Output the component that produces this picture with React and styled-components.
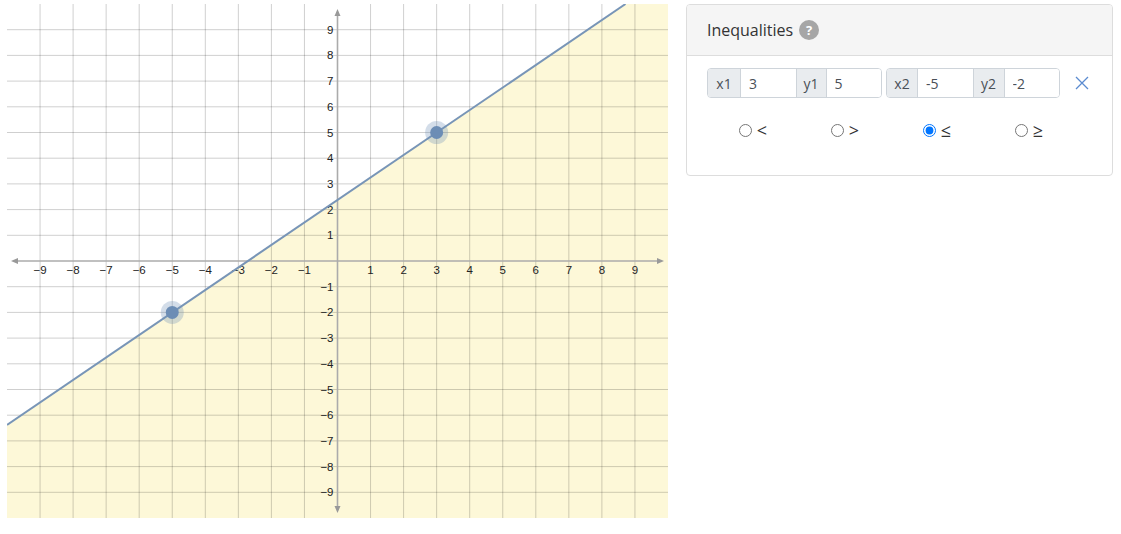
import styled, { createGlobalStyle } from "styled-components";

const GlobalStyle = createGlobalStyle`
  body {
    margin: 0;
    font-family: "Open Sans", "Noto Sans", sans-serif;
    background: #fff;
  }
`;

const W = 661;
const H = 514;
const px = (x) => W / 2 + x * (W / 20);
const py = (y) => H / 2 - y * (H / 20);

const ticks = [-9, -8, -7, -6, -5, -4, -3, -2, -1, 1, 2, 3, 4, 5, 6, 7, 8, 9];
const minus = (n) => (n < 0 ? `\u2212${-n}` : `${n}`);

const p1 = { x: 3, y: 5 };
const p2 = { x: -5, y: -2 };
const slope = (p1.y - p2.y) / (p1.x - p2.x);
const lineY = (x) => p1.y + slope * (x - p1.x);
const lineX = (y) => p1.x + (y - p1.y) / slope;

const Page = styled.div`
  display: flex;
  align-items: flex-start;
  gap: 18px;
  padding: 4px 7px;
`;

const Graph = styled.svg`
  display: block;
  flex: none;
  width: ${W}px;
  height: ${H}px;
`;

const Panel = styled.div`
  width: 427px;
  height: 172px;
  box-sizing: border-box;
  border: 1px solid #ddd;
  border-radius: 4px;
  overflow: hidden;
`;

const Header = styled.div`
  height: 50px;
  display: flex;
  align-items: center;
  gap: 6px;
  padding: 0 20px;
  background: #f5f5f5;
  border-bottom: 1px solid #ddd;
  color: #333;
  font-size: 16px;
`;

const Help = styled.span`
  width: 20px;
  height: 20px;
  border-radius: 50%;
  background: #a6a6a6;
  color: #fff;
  font-size: 13px;
  font-weight: 700;
  display: inline-flex;
  align-items: center;
  justify-content: center;
  line-height: 1;
`;

const Body = styled.div`
  padding: 12px 20px 0;
`;

const InputRow = styled.div`
  display: flex;
  align-items: center;
  gap: 4px;
`;

const Group = styled.div`
  flex: none;
  display: flex;
  width: ${(p) => p.$w}px;
  height: 30px;
  box-sizing: border-box;
  border: 1px solid #ced4da;
  border-radius: 4px;
  overflow: hidden;
`;

const Addon = styled.span`
  flex: none;
  width: ${(p) => p.$w || 32}px;
  display: flex;
  align-items: center;
  justify-content: center;
  background: #e9ecef;
  color: #495057;
  font-size: 14px;
  border-left: ${(p) => (p.$first ? "none" : "1px solid #ced4da")};
  border-right: 1px solid #ced4da;
  box-sizing: border-box;
`;

const Field = styled.input`
  flex: 1 1 0;
  min-width: 0;
  box-sizing: border-box;
  border: none;
  outline: none;
  padding: 0 8px;
  font-family: inherit;
  font-size: 14px;
  color: #495057;
  background: #fff;
`;

const Remove = styled.button`
  margin-left: 11px;
  width: 14px;
  height: 20px;
  padding: 0;
  border: none;
  background: none;
  display: flex;
  align-items: center;
  justify-content: center;
  cursor: pointer;
`;

const Radios = styled.div`
  display: grid;
  grid-template-columns: repeat(4, 92px);
  margin-top: 22px;
`;

const Option = styled.label`
  display: flex;
  align-items: center;
  justify-content: center;
  gap: 2px;
  font-size: 18px;
  color: #333;
  height: 20px;

  input {
    margin: 0 3px 0 0;
    width: 13px;
    height: 13px;
  }
`;

const ops = ["<", ">", "\u2264", "\u2265"];

function Plane() {
  const ex = lineX(10);
  const ly = lineY(-10);
  const shade = [
    [px(-10), py(ly)],
    [px(ex), py(10)],
    [px(10), py(10)],
    [px(10), py(-10)],
    [px(-10), py(-10)],
  ]
    .map((p) => p.join(","))
    .join(" ");
  const ox = px(0);
  const oy = py(0);

  return (
    <Graph viewBox={`0 0 ${W} ${H}`}>
      <polygon points={shade} fill="#fdf8d8" />
      {ticks.map((t) => (
        <line key={`v${t}`} x1={px(t)} y1={0} x2={px(t)} y2={H} stroke="rgba(0,0,0,0.19)" strokeWidth="1" />
      ))}
      {ticks.map((t) => (
        <line key={`h${t}`} x1={0} y1={py(t)} x2={W} y2={py(t)} stroke="rgba(0,0,0,0.19)" strokeWidth="1" />
      ))}
      {/* axes */}
      <line x1={8} y1={oy} x2={W - 8} y2={oy} stroke="#ababab" strokeWidth="1.6" />
      <line x1={ox} y1={8} x2={ox} y2={H - 8} stroke="#ababab" strokeWidth="1.6" />
      <polygon points={`${4},${oy} ${11},${oy - 3} ${11},${oy + 3}`} fill="#999" />
      <polygon points={`${W - 4},${oy} ${W - 11},${oy - 3} ${W - 11},${oy + 3}`} fill="#999" />
      <polygon points={`${ox},${5} ${ox - 3},${12} ${ox + 3},${12}`} fill="#999" />
      <polygon points={`${ox},${H - 5} ${ox - 3},${H - 12} ${ox + 3},${H - 12}`} fill="#999" />
      <g fontFamily="'Liberation Sans', Arial, sans-serif" fontSize="11.5" fill="#222">
        {ticks.map((t) => (
          <text key={`lx${t}`} x={px(t)} y={oy + 12.5} textAnchor="middle">
            {minus(t)}
          </text>
        ))}
        {ticks.map((t) => (
          <text key={`ly${t}`} x={ox - 4} y={py(t) + 4} textAnchor="end">
            {minus(t)}
          </text>
        ))}
      </g>
      <line x1={px(-10)} y1={py(ly)} x2={px(ex)} y2={py(10)} stroke="#7895b7" strokeWidth="2" />
      {[p1, p2].map((p, i) => (
        <g key={i}>
          <circle cx={px(p.x)} cy={py(p.y)} r="11.5" fill="rgba(108,141,181,0.3)" />
          <circle cx={px(p.x)} cy={py(p.y)} r="6.5" fill="#6c8db5" />
        </g>
      ))}
    </Graph>
  );
}

export default function App() {
  return (
    <>
      <GlobalStyle />
      <Page>
        <Plane />
        <Panel>
          <Header>
            Inequalities <Help>?</Help>
          </Header>
          <Body>
            <InputRow>
              <Group $w={175}>
                <Addon $first $w={33}>x1</Addon>
                <Field defaultValue="3" />
                <Addon $w={31}>y1</Addon>
                <Field defaultValue="5" />
              </Group>
              <Group $w={174}>
                <Addon $first $w={31}>x2</Addon>
                <Field defaultValue="-5" />
                <Addon $w={32}>y2</Addon>
                <Field defaultValue="-2" />
              </Group>
              <Remove aria-label="remove">
                <svg width="14" height="14" viewBox="0 0 14 14">
                  <path d="M1 1 L13 13 M13 1 L1 13" stroke="#5b8bd0" strokeWidth="1.3" fill="none" />
                </svg>
              </Remove>
            </InputRow>
            <Radios>
              {ops.map((o, i) => (
                <Option key={o}>
                  <input type="radio" name="op" defaultChecked={i === 2} />
                  {o}
                </Option>
              ))}
            </Radios>
          </Body>
        </Panel>
      </Page>
    </>
  );
}
